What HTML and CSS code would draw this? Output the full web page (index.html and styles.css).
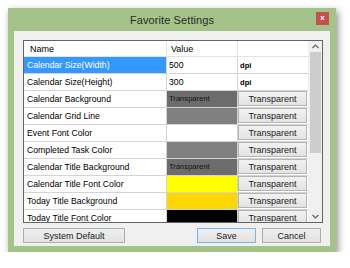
FILE: index.html
```html
<!DOCTYPE html>
<html>
<head>
<meta charset="utf-8">
<link rel="stylesheet" href="styles.css">
</head>
<body>
<div class="window">
  <div class="titlebar">
    <span></span>
    <span class="title">Favorite Settings</span>
    <span class="close">x</span>
  </div>
  <div class="client">
    <div class="list">
      <div class="grid">
        <div class="row head">
          <div class="c1">Name</div><div class="c2">Value</div><div class="c3"></div>
        </div>
        <div class="row">
          <div class="c1 sel">Calendar Size(Width)</div><div class="c2 white">500</div><div class="c3"><b class="dpi">dpi</b></div>
        </div>
        <div class="row">
          <div class="c1">Calendar Size(Height)</div><div class="c2 white">300</div><div class="c3"><b class="dpi">dpi</b></div>
        </div>
        <div class="row">
          <div class="c1">Calendar Background</div><div class="c2 dark"><span class="tiny">Transparent</span></div><div class="c3"><span class="btn">Transparent</span></div>
        </div>
        <div class="row">
          <div class="c1">Calendar Grid Line</div><div class="c2 grey"></div><div class="c3"><span class="btn">Transparent</span></div>
        </div>
        <div class="row">
          <div class="c1">Event Font Color</div><div class="c2 white"></div><div class="c3"><span class="btn">Transparent</span></div>
        </div>
        <div class="row">
          <div class="c1">Completed Task Color</div><div class="c2 grey"></div><div class="c3"><span class="btn">Transparent</span></div>
        </div>
        <div class="row">
          <div class="c1">Calendar Title Background</div><div class="c2 dark"><span class="tiny">Transparent</span></div><div class="c3"><span class="btn">Transparent</span></div>
        </div>
        <div class="row">
          <div class="c1">Calendar Title Font Color</div><div class="c2 yellow"></div><div class="c3"><span class="btn">Transparent</span></div>
        </div>
        <div class="row">
          <div class="c1">Today Title Background</div><div class="c2 gold"></div><div class="c3"><span class="btn">Transparent</span></div>
        </div>
        <div class="row">
          <div class="c1">Today Title Font Color</div><div class="c2 black"></div><div class="c3"><span class="btn">Transparent</span></div>
        </div>
      </div>
      <div class="scrollbar">
        <div class="arrow"><svg width="7" height="5" viewBox="0 0 7 5"><polyline points="0.5,4 3.5,1 6.5,4" fill="none" stroke="#606060" stroke-width="1.2"/></svg></div>
        <div class="thumb"></div>
        <div class="track"></div>
        <div class="arrow"><svg width="7" height="5" viewBox="0 0 7 5"><polyline points="0.5,1 3.5,4 6.5,1" fill="none" stroke="#606060" stroke-width="1.2"/></svg></div>
      </div>
    </div>
    <div class="buttons">
      <span class="pbtn sysdef">System Default</span>
      <span class="spacer"></span>
      <span class="pbtn save">Save</span>
      <span class="pbtn cancel">Cancel</span>
    </div>
  </div>
</div>
</body>
</html>
```

FILE: styles.css
```css
* { box-sizing: border-box; }
html, body { margin: 0; padding: 0; background: #ffffff; }
body { font-family: "Liberation Sans", Arial, sans-serif; }

.window {
  margin: 8px 0 0 8px;
  width: 328px;
  height: 244px;
  background: #a4c388;
  padding: 0 6px 6px 6px;
  display: flex;
  flex-direction: column;
  box-shadow: 2px 3px 7px rgba(0,0,0,0.45);
}

.titlebar {
  height: 23px;
  display: grid;
  grid-template-columns: 1fr auto 1fr;
  align-items: start;
}
.title {
  font-size: 11px;
  color: #2a2a2a;
  padding-top: 6px;
  letter-spacing: 0.1px;
}
.close {
  justify-self: end;
  margin-top: 4px;
  margin-right: 1px;
  width: 13px;
  height: 13px;
  background: #c74f4f;
  color: #fff;
  font-size: 8px;
  line-height: 12px;
  text-align: center;
  font-weight: bold;
}

.client {
  flex: 1;
  background: #f0f0f0;
  padding: 9px 8px 0 9px;
  display: flex;
  flex-direction: column;
}

.list {
  width: 300px;
  height: 183px;
  border: 1px solid #646464;
  background: #ffffff;
  display: flex;
  overflow: hidden;
}
.grid {
  width: 284px;
  display: flex;
  flex-direction: column;
  overflow: hidden;
}
.row {
  display: grid;
  grid-template-columns: 143px 71px 70px;
  height: 17px;
  flex: none;
  border-bottom: 1px solid #d4d4d4;
  font-size: 8.7px;
  color: #000;
}
.row > div {
  display: flex;
  align-items: center;
  white-space: nowrap;
  overflow: hidden;
}
.row .c1 { border-right: 1px solid #d4d4d4; padding-left: 3px; }
.row .c2 { border-right: 1px solid #d4d4d4; padding-left: 2px; }
.row .c3 { padding-left: 0; align-items: stretch; }

.head { height: 16px; border-bottom: 1px solid #e3e3e3; font-size: 9px; }
.head .c1 { padding-left: 6px; border-right-color: #e3e3e3; }
.head .c2 { padding-left: 4px; border-right-color: #e3e3e3; }

.sel { background: #3399ff; color: #fff; }
.white { background: #fff; }
.dark { background: #6c6c6c; align-items: flex-start !important; }
.grey { background: #808080; }
.yellow { background: #ffff00; }
.gold { background: #ffd700; }
.black { background: #000; }

.tiny { font-size: 7.6px; color: #111; padding-top: 3px; }
.dpi { font-size: 7.6px; padding-left: 2px; align-self: center; }

.btn {
  width: 69px;
  height: 15px;
  margin-top: 0;
  background: linear-gradient(#f2f2f2, #e3e3e3);
  border: 1px solid #b4b4b4;
  font-size: 9px;
  color: #1a1a1a;
  display: flex;
  align-items: center;
  justify-content: center;
}

.scrollbar {
  width: 14px;
  background: #f0f0f0;
  display: flex;
  flex-direction: column;
  align-items: center;
}
.arrow {
  height: 11px;
  width: 100%;
  display: flex;
  align-items: center;
  justify-content: center;
}
.thumb {
  width: 11px;
  height: 101px;
  background: #cdcdcd;
}
.track { flex: 1; }

.buttons {
  margin-top: 5px;
  display: flex;
  gap: 6px;
}
.spacer { flex: 1; }
.pbtn {
  height: 15px;
  background: linear-gradient(#efefef, #e2e2e2);
  border: 1px solid #adadad;
  font-size: 9px;
  color: #1a1a1a;
  display: flex;
  align-items: center;
  justify-content: center;
}
.sysdef { width: 102px; }
.save { width: 59px; border-color: #7ab3e6; }
.cancel { width: 59px; margin-right: 1px; }
```
